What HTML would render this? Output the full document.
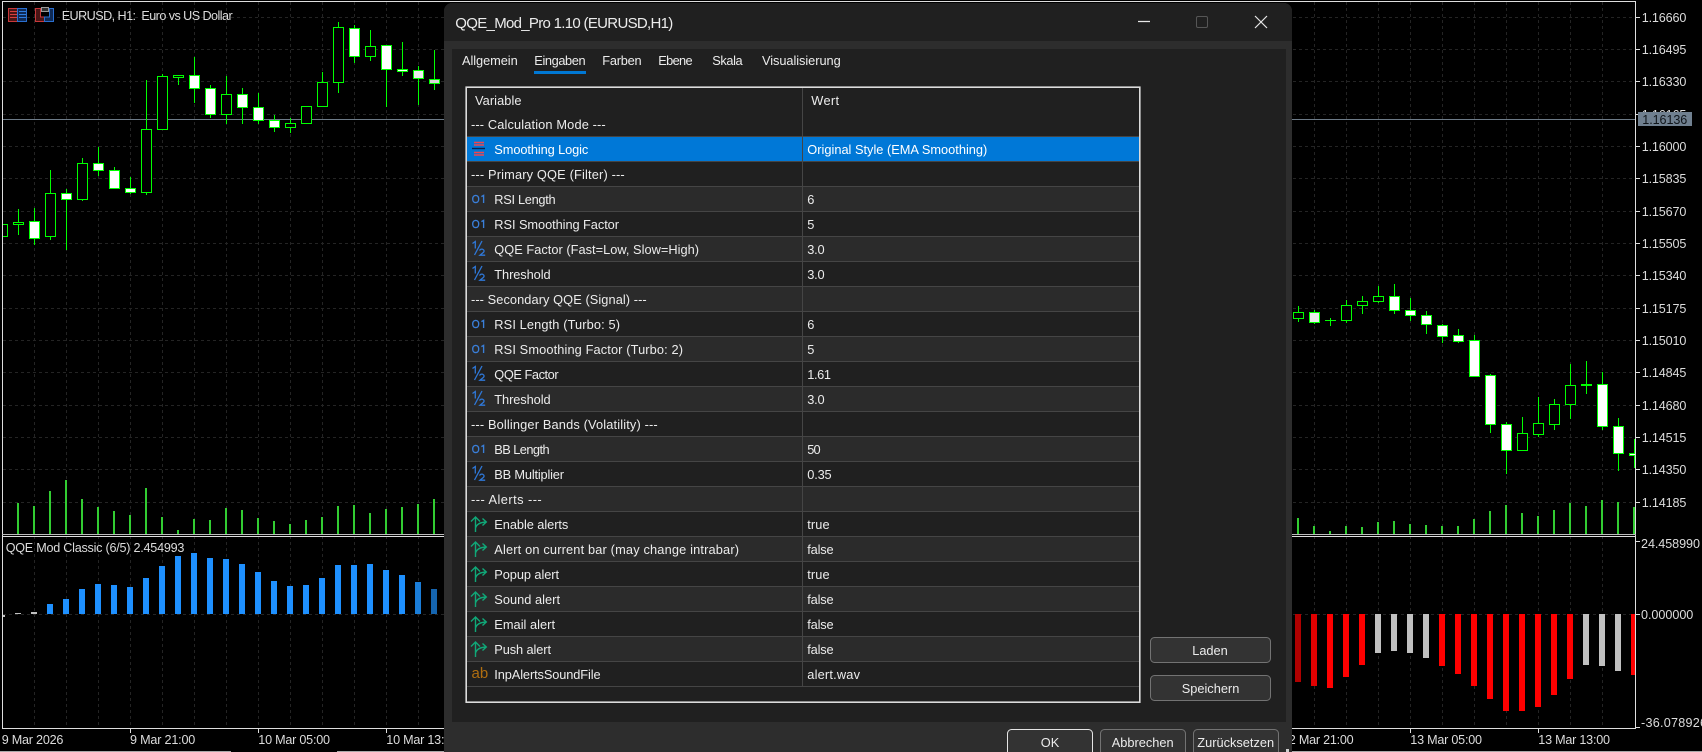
<!DOCTYPE html>
<html><head><meta charset="utf-8"><title>QQE_Mod_Pro 1.10 (EURUSD,H1)</title>
<style>
html,body{margin:0;padding:0;background:#000;width:1702px;height:752px;overflow:hidden}
svg{display:block}
text{font-family:"Liberation Sans",sans-serif;font-size:13px;white-space:pre}
.c text{fill:#dcdcdc;font-size:12.6px}
.d text{fill:#ececec;font-size:12.8px}
.m{text-anchor:middle}
</style></head><body>
<svg width="1702" height="752" viewBox="0 0 1702 752" xmlns="http://www.w3.org/2000/svg">
<defs><clipPath id="pl"><rect x="3" y="2" width="1632" height="726"/></clipPath></defs>
<rect width="1702" height="752" fill="#000"/>
<g shape-rendering="crispEdges" clip-path="url(#pl)">
<path fill="none" stroke="#242424" stroke-dasharray="3 3" d="M3 17.5H1635M3 49.5H1635M3 81.5H1635M3 114.5H1635M3 146.5H1635M3 178.5H1635M3 211.5H1635M3 243.5H1635M3 275.5H1635M3 308.5H1635M3 340.5H1635M3 372.5H1635M3 405.5H1635M3 437.5H1635M3 469.5H1635M3 502.5H1635M3 614.5H1635"/>
<path fill="none" stroke="#242424" stroke-dasharray="3 3" d="M34.5 2V728M66.5 2V728M98.5 2V728M130.5 2V728M162.5 2V728M194.5 2V728M226.5 2V728M258.5 2V728M290.5 2V728M322.5 2V728M354.5 2V728M386.5 2V728M418.5 2V728M1314.5 2V728M1346.5 2V728M1378.5 2V728M1410.5 2V728M1442.5 2V728M1474.5 2V728M1506.5 2V728M1538.5 2V728M1570.5 2V728M1602.5 2V728"/>
<rect x="3" y="119" width="1632" height="1" fill="#6d7b88"/>
<!-- wicks -->
<path fill="none" stroke="#00ff00" d="M18.5 209V235M34.5 208V245M50.5 170V240M66.5 189V250M82.5 158V201M98.5 147V176M114.5 167V189M130.5 177V194M146.5 80V195M162.5 74V130M178.5 75V85M194.5 57V103M210.5 85V118M226.5 76V124M242.5 88V124M258.5 93V124M274.5 115V132M290.5 118V133M322.5 72V107M338.5 22V93M354.5 25V63M370.5 30V61M386.5 45V107M402.5 42V76M418.5 66V105M434.5 50V90M1298.5 306V322M1314.5 310V324M1330.5 318V326M1346.5 300V323M1362.5 296V314M1378.5 286V303M1394.5 284V314M1410.5 298V321M1426.5 311V334M1442.5 324V343M1458.5 329V343M1474.5 335V377M1490.5 374V433M1506.5 422V474M1522.5 417V451M1538.5 397V437M1554.5 399V430M1570.5 364V419M1586.5 361V394M1602.5 372V430M1618.5 418V471M1634.5 439V468M1325 320.5H1336"/>
<!-- hollow bodies -->
<path fill="#000" stroke="#00ff00" d="M-2.5 224.5h10V236.5h-10zM13.5 222.5h10V224.5h-10zM45.5 193.5h10V236.5h-10zM77.5 163.5h10V199.5h-10zM141.5 129.5h10V192.5h-10zM157.5 76.5h10V129.5h-10zM173.5 75.5h10V77.5h-10zM221.5 94.5h10V114.5h-10zM285.5 123.5h10V127.5h-10zM301.5 106.5h10V123.5h-10zM317.5 82.5h10V106.5h-10zM333.5 27.5h10V82.5h-10zM365.5 46.5h10V56.5h-10zM1293.5 312.5h10V318.5h-10zM1341.5 305.5h10V320.5h-10zM1357.5 301.5h10V305.5h-10zM1373.5 296.5h10V301.5h-10zM1517.5 433.5h10V450.5h-10zM1533.5 423.5h10V434.5h-10zM1549.5 404.5h10V424.5h-10zM1565.5 385.5h10V404.5h-10z"/>
<!-- white bodies -->
<path fill="#fff" stroke="#00ff00" d="M29.5 221.5h10V238.5h-10zM61.5 193.5h10V199.5h-10zM93.5 163.5h10V170.5h-10zM109.5 170.5h10V188.5h-10zM125.5 188.5h10V192.5h-10zM189.5 75.5h10V88.5h-10zM205.5 88.5h10V114.5h-10zM237.5 94.5h10V107.5h-10zM253.5 107.5h10V120.5h-10zM269.5 120.5h10V127.5h-10zM349.5 28.5h10V56.5h-10zM381.5 45.5h10V69.5h-10zM397.5 69.5h10V71.5h-10zM1389.5 296.5h10V310.5h-10zM1405.5 310.5h10V315.5h-10zM1421.5 315.5h10V324.5h-10zM1437.5 325.5h10V336.5h-10zM1453.5 335.5h10V341.5h-10zM1469.5 340.5h10V376.5h-10zM1485.5 375.5h10V424.5h-10zM1501.5 424.5h10V450.5h-10zM1597.5 384.5h10V426.5h-10zM1613.5 426.5h10V453.5h-10zM1629.5 453.5h10V455.5h-10z"/>
<path fill="#ececec" stroke="#00ff00" d="M413.5 70.5h10V78.5h-10zM1309.5 312.5h10V322.5h-10z"/>
<path fill="#d8d8d8" stroke="#00ff00" d="M429.5 79.5h10V83.5h-10z"/>
<rect x="1581" y="384" width="11" height="2" fill="#00ff00"/>
<!-- volumes -->
<path fill="none" stroke="#32cd32" stroke-width="2" d="M18 503V534M34 506V534M50 491V534M66 480V534M82 499V534M98 507V534M114 511V534M130 515V534M146 488V534M162 517V534M178 530V534M194 519V534M210 520V534M226 508V534M242 510V534M258 518V534M274 521V534M290 524V534M306 520V534M322 517V534M338 506V534M354 505V534M370 513V534M386 509V534M402 507V534M418 504V534M434 499V534M1298 518V534M1314 526V534M1330 531V534M1346 526V534M1362 527V534M1378 522V534M1394 521V534M1410 524V534M1426 525V534M1442 526V534M1458 526V534M1474 519V534M1490 511V534M1506 505V534M1522 513V534M1538 516V534M1554 510V534M1570 503V534M1586 506V534M1602 500V534M1618 502V534M1634 507V534"/>
<!-- indicator -->
<path fill="#1e90ff" d="M47 604h6V614h-6zM63 599h6V614h-6zM79 589h6V614h-6zM95 584h6V614h-6zM111 585h6V614h-6zM127 587h6V614h-6zM143 578h6V614h-6zM159 566h6V614h-6zM175 556h6V614h-6zM191 553h6V614h-6zM207 558h6V614h-6zM223 559h6V614h-6zM239 564h6V614h-6zM255 572h6V614h-6zM271 581h6V614h-6zM287 586h6V614h-6zM303 585h6V614h-6zM319 578h6V614h-6zM335 565h6V614h-6zM351 565h6V614h-6zM367 564h6V614h-6zM383 570h6V614h-6zM399 575h6V614h-6z"/>
<path fill="#1a7dd8" d="M415 582h6V614h-6z"/>
<path fill="#1565b0" d="M431 589h6V614h-6z"/>
<path fill="#c0c0c0" d="M15 613h6v1h-6zM31 612h6v2h-6zM3 615h2v2h-2z"/>
<path fill="#b00000" d="M1295 614h6V682h-6z"/>
<path fill="#e00000" d="M1311 614h6V686h-6z"/>
<path fill="#ff0000" d="M1327 614h6V688h-6zM1343 614h6V677h-6zM1359 614h6V665h-6zM1439 614h6V666h-6zM1455 614h6V674h-6zM1471 614h6V686h-6zM1487 614h6V699h-6zM1503 614h6V711h-6zM1519 614h6V711h-6zM1535 614h6V707h-6zM1551 614h6V695h-6zM1567 614h6V679h-6zM1631 614h6V675h-6z"/>
<path fill="#c0c0c0" d="M1375 614h6V653h-6zM1391 614h6V651h-6zM1407 614h6V653h-6zM1423 614h6V658h-6zM1583 614h6V665h-6zM1599 614h6V666h-6zM1615 614h6V671h-6z"/>
</g>
<!-- frame lines -->
<g shape-rendering="crispEdges" fill="#dedede">
<rect x="2" y="1" width="1634" height="1"/>
<rect x="2" y="1" width="1" height="728"/>
<rect x="1635" y="1" width="1" height="728"/>
<rect x="2" y="534" width="1634" height="1" fill="#bdbdbd"/>
<rect x="2" y="536" width="1634" height="1"/>
<rect x="2" y="728" width="1634" height="1"/>
<rect x="130" y="728" width="1" height="5"/><rect x="258" y="728" width="1" height="5"/><rect x="386" y="728" width="1" height="5"/><rect x="1410" y="728" width="1" height="5"/><rect x="1538" y="728" width="1" height="5"/>
<path stroke="#dedede" fill="none" d="M1635 17.5h5M1635 49.5h5M1635 81.5h5M1635 114.5h5M1635 146.5h5M1635 178.5h5M1635 211.5h5M1635 243.5h5M1635 275.5h5M1635 308.5h5M1635 340.5h5M1635 372.5h5M1635 405.5h5M1635 437.5h5M1635 469.5h5M1635 502.5h5M1635 541.5h5M1635 614.5h5M1635 727.5h5"/>
<rect x="0" y="751" width="231" height="1" fill="#a8a8a8"/>
<rect x="337" y="751" width="1365" height="1" fill="#a8a8a8"/>
</g>
<!-- toolbar icons -->
<g fill="none" stroke-width="1" shape-rendering="crispEdges">
<rect x="8.5" y="8.5" width="9" height="13" fill="#4a1515" stroke="#c8383a"/>
<path stroke="#d84040" d="M10 11.5h7M10 14.5h7M10 17.5h7"/>
<rect x="17.5" y="8.5" width="9" height="13" fill="#0f2a55" stroke="#2a6fd0"/>
<path stroke="#2f7fe0" d="M19 11.5h7M19 14.5h7M19 17.5h7"/>
<path d="M35.5 8.5h5V17h4v4.5h-9z" fill="#4a1515" stroke="#c8383a"/>
<path d="M53.5 8.5h-4V17h-5v4.5h9z" fill="#0f2a55" stroke="#2a6fd0"/>
<rect x="41.5" y="7.5" width="7" height="4" fill="#333" stroke="#9a9a9a"/>
</g>
<!-- chart text -->
<g class="c">
<text x="61.7" y="20" textLength="171">EURUSD, H1:  Euro vs US Dollar</text>
<text x="5.7" y="552" textLength="178.7">QQE Mod Classic (6/5) 2.454993</text>
<text x="1.7" y="744" textLength="61.7">9 Mar 2026</text>
<text x="130" y="744" textLength="65.3">9 Mar 21:00</text>
<text x="258.3" y="744" textLength="71.7">10 Mar 05:00</text>
<text x="386.3" y="744" textLength="71.7">10 Mar 13:00</text>
<text x="1282" y="744" textLength="71.7">12 Mar 21:00</text>
<text x="1410.3" y="744" textLength="71.7">13 Mar 05:00</text>
<text x="1538.3" y="744" textLength="71.7">13 Mar 13:00</text>
<text x="1641.7" y="22" textLength="44.7">1.16660</text>
<text x="1641.7" y="54" textLength="44.7">1.16495</text>
<text x="1641.7" y="86" textLength="44.7">1.16330</text>
<text x="1641.7" y="119" textLength="44.7">1.16165</text>
<text x="1641.7" y="151" textLength="44.7">1.16000</text>
<text x="1641.7" y="183" textLength="44.7">1.15835</text>
<text x="1641.7" y="216" textLength="44.7">1.15670</text>
<text x="1641.7" y="248" textLength="44.7">1.15505</text>
<text x="1641.7" y="280" textLength="44.7">1.15340</text>
<text x="1641.7" y="313" textLength="44.7">1.15175</text>
<text x="1641.7" y="345" textLength="44.7">1.15010</text>
<text x="1641.7" y="377" textLength="44.7">1.14845</text>
<text x="1641.7" y="410" textLength="44.7">1.14680</text>
<text x="1641.7" y="442" textLength="44.7">1.14515</text>
<text x="1641.7" y="474" textLength="44.7">1.14350</text>
<text x="1641.7" y="507" textLength="44.7">1.14185</text>
<text x="1641" y="548" textLength="59">24.458990</text>
<text x="1641" y="619" textLength="52.3">0.000000</text>
<text x="1641" y="727" textLength="66">-36.078926</text>
</g>
<rect x="1638" y="112" width="54" height="14" fill="#708090"/>
<text x="1642.3" y="124" textLength="45" style="font-size:12.6px" fill="#10151a">1.16136</text>

<!-- dialog -->
<rect x="444" y="3" width="848" height="770" rx="8" fill="#2d2d2d"/>
<path d="M444 41V11a8 8 0 0 1 8-8H1284a8 8 0 0 1 8 8V41z" fill="#202020"/>
<rect x="452" y="49" width="834" height="673" fill="#202020"/>
<g class="d">
<text x="455.3" y="28" style="font-size:15px" textLength="218">QQE_Mod_Pro 1.10 (EURUSD,H1)</text>
<text x="462" y="65" textLength="55.7">Allgemein</text>
<text x="534.3" y="65" textLength="51.3">Eingaben</text>
<text x="602.3" y="65" textLength="39.3">Farben</text>
<text x="658.3" y="65" textLength="34.3">Ebene</text>
<text x="712.3" y="65" textLength="30.3">Skala</text>
<text x="762" y="65" textLength="78.7">Visualisierung</text>
</g>
<rect x="534" y="71" width="52" height="3" fill="#0078d4"/>
<path d="M1138 21.5h12M1255 16l12 12M1267 16l-12 12" stroke="#e8e8e8" stroke-width="1.2" fill="none"/>
<rect x="1196.5" y="16.5" width="11" height="11" rx="1.5" fill="none" stroke="#565656"/>

<!-- table -->
<g shape-rendering="crispEdges">
<rect x="467" y="88" width="672" height="614" fill="#202020"/>
<g fill="#2b2b2b">
<rect x="467" y="186" width="672" height="25"/><rect x="467" y="236" width="672" height="25"/><rect x="467" y="286" width="672" height="25"/><rect x="467" y="336" width="672" height="25"/><rect x="467" y="386" width="672" height="25"/><rect x="467" y="436" width="672" height="25"/><rect x="467" y="486" width="672" height="25"/><rect x="467" y="536" width="672" height="25"/><rect x="467" y="586" width="672" height="25"/><rect x="467" y="636" width="672" height="25"/>
</g>
<rect x="467" y="136" width="672" height="25" fill="#0078d7"/>
<path stroke="#454545" fill="none" d="M467 136.5H1139M467 161.5H1139M467 186.5H1139M467 211.5H1139M467 236.5H1139M467 261.5H1139M467 286.5H1139M467 311.5H1139M467 336.5H1139M467 361.5H1139M467 386.5H1139M467 411.5H1139M467 436.5H1139M467 461.5H1139M467 486.5H1139M467 511.5H1139M467 536.5H1139M467 561.5H1139M467 586.5H1139M467 611.5H1139M467 636.5H1139M467 661.5H1139M467 686.5H1139M802.5 88V687"/>
</g>
<rect x="466.2" y="87.2" width="673.6" height="615" fill="none" stroke="#dcdcdc" stroke-width="1.6"/>

<g class="d">
<text x="475" y="105" textLength="46.5">Variable</text>
<text x="811.3" y="105" textLength="27.7">Wert</text>
<text x="471" y="129" textLength="134.7">--- Calculation Mode ---</text>
<text x="494.3" y="154" textLength="94" style="fill:#fff">Smoothing Logic</text>
<text x="807.3" y="154" textLength="180" style="fill:#fff">Original Style (EMA Smoothing)</text>
<text x="471" y="179" textLength="153.7">--- Primary QQE (Filter) ---</text>
<text x="494.3" y="204" textLength="61.3">RSI Length</text><text x="807.3" y="204">6</text>
<text x="494.3" y="229" textLength="124.7">RSI Smoothing Factor</text><text x="807.3" y="229">5</text>
<text x="494.3" y="254" textLength="204.7">QQE Factor (Fast=Low, Slow=High)</text><text x="807.3" y="254" textLength="17.3">3.0</text>
<text x="494.3" y="279" textLength="56.3">Threshold</text><text x="807.3" y="279" textLength="17.3">3.0</text>
<text x="471" y="304" textLength="175.7">--- Secondary QQE (Signal) ---</text>
<text x="494.3" y="329" textLength="125.7">RSI Length (Turbo: 5)</text><text x="807.3" y="329">6</text>
<text x="494.3" y="354" textLength="188.7">RSI Smoothing Factor (Turbo: 2)</text><text x="807.3" y="354">5</text>
<text x="494.3" y="379" textLength="64.3">QQE Factor</text><text x="807.3" y="379" textLength="23.7">1.61</text>
<text x="494.3" y="404" textLength="56.3">Threshold</text><text x="807.3" y="404" textLength="17.3">3.0</text>
<text x="471" y="429" textLength="186.7">--- Bollinger Bands (Volatility) ---</text>
<text x="494.3" y="454" textLength="55.3">BB Length</text><text x="807.3" y="454" textLength="13.3">50</text>
<text x="494.3" y="479" textLength="69.7">BB Multiplier</text><text x="807.3" y="479" textLength="24.3">0.35</text>
<text x="471" y="504" textLength="70.7">--- Alerts ---</text>
<text x="494.3" y="529" textLength="74">Enable alerts</text><text x="807.3" y="529" textLength="22.3">true</text>
<text x="494.3" y="554" textLength="244.7">Alert on current bar (may change intrabar)</text><text x="807.3" y="554" textLength="26.3">false</text>
<text x="494.3" y="579" textLength="64.7">Popup alert</text><text x="807.3" y="579" textLength="22.3">true</text>
<text x="494.3" y="604" textLength="65.7">Sound alert</text><text x="807.3" y="604" textLength="26.3">false</text>
<text x="494.3" y="629" textLength="60.7">Email alert</text><text x="807.3" y="629" textLength="26.3">false</text>
<text x="494.3" y="654" textLength="56.7">Push alert</text><text x="807.3" y="654" textLength="26.3">false</text>
<text x="494.3" y="679" textLength="106.3">InpAlertsSoundFile</text><text x="807.3" y="679" textLength="52.7">alert.wav</text>
</g>

<!-- enum icon -->
<path fill="none" d="M474 142.5h10M474 145h10M474 152.5h10M474 155h10" stroke="#f04650" stroke-width="1.4"/>
<path fill="none" d="M472 148.5h13" stroke="#0b2350" stroke-width="1.4"/>

<!-- int icons -->
<g fill="none" stroke="#3a7fd9" stroke-width="1.35">
<path transform="translate(0,186)" d="M475.7 9.4c2 0 3 1.6 3 3.6s-1 3.6-3 3.6-3-1.6-3-3.6 1-3.6 3-3.6zM481.4 10.6l2.2-1.2V17"/>
<path transform="translate(0,211)" d="M475.7 9.4c2 0 3 1.6 3 3.6s-1 3.6-3 3.6-3-1.6-3-3.6 1-3.6 3-3.6zM481.4 10.6l2.2-1.2V17"/>
<path transform="translate(0,311)" d="M475.7 9.4c2 0 3 1.6 3 3.6s-1 3.6-3 3.6-3-1.6-3-3.6 1-3.6 3-3.6zM481.4 10.6l2.2-1.2V17"/>
<path transform="translate(0,336)" d="M475.7 9.4c2 0 3 1.6 3 3.6s-1 3.6-3 3.6-3-1.6-3-3.6 1-3.6 3-3.6zM481.4 10.6l2.2-1.2V17"/>
<path transform="translate(0,436)" d="M475.7 9.4c2 0 3 1.6 3 3.6s-1 3.6-3 3.6-3-1.6-3-3.6 1-3.6 3-3.6zM481.4 10.6l2.2-1.2V17"/>
</g>
<!-- double icons -->
<g fill="none" stroke="#2f78d8" stroke-width="1.3">
<path transform="translate(0,236)" d="M472.5 7.5l2.8-2V12.5M482 5L474.5 19M479.5 14.5c.8-1.2 2-1.6 3.2-1.2 1.8.7 1.6 2.2.7 3.1l-3.4 2.8h5.2"/>
<path transform="translate(0,261)" d="M472.5 7.5l2.8-2V12.5M482 5L474.5 19M479.5 14.5c.8-1.2 2-1.6 3.2-1.2 1.8.7 1.6 2.2.7 3.1l-3.4 2.8h5.2"/>
<path transform="translate(0,361)" d="M472.5 7.5l2.8-2V12.5M482 5L474.5 19M479.5 14.5c.8-1.2 2-1.6 3.2-1.2 1.8.7 1.6 2.2.7 3.1l-3.4 2.8h5.2"/>
<path transform="translate(0,386)" d="M472.5 7.5l2.8-2V12.5M482 5L474.5 19M479.5 14.5c.8-1.2 2-1.6 3.2-1.2 1.8.7 1.6 2.2.7 3.1l-3.4 2.8h5.2"/>
<path transform="translate(0,461)" d="M472.5 7.5l2.8-2V12.5M482 5L474.5 19M479.5 14.5c.8-1.2 2-1.6 3.2-1.2 1.8.7 1.6 2.2.7 3.1l-3.4 2.8h5.2"/>
</g>
<!-- bool icons -->
<g fill="none" stroke="#10a878" stroke-width="1.4">
<path transform="translate(0,511)" d="M475.5 21V6M471 10.5l4.5-4.5 4.5 4.5M475.5 17c1-3.5 4-5.6 10.5-6M482.5 7.5l3.8 3.5-3.8 3.5"/>
<path transform="translate(0,536)" d="M475.5 21V6M471 10.5l4.5-4.5 4.5 4.5M475.5 17c1-3.5 4-5.6 10.5-6M482.5 7.5l3.8 3.5-3.8 3.5"/>
<path transform="translate(0,561)" d="M475.5 21V6M471 10.5l4.5-4.5 4.5 4.5M475.5 17c1-3.5 4-5.6 10.5-6M482.5 7.5l3.8 3.5-3.8 3.5"/>
<path transform="translate(0,586)" d="M475.5 21V6M471 10.5l4.5-4.5 4.5 4.5M475.5 17c1-3.5 4-5.6 10.5-6M482.5 7.5l3.8 3.5-3.8 3.5"/>
<path transform="translate(0,611)" d="M475.5 21V6M471 10.5l4.5-4.5 4.5 4.5M475.5 17c1-3.5 4-5.6 10.5-6M482.5 7.5l3.8 3.5-3.8 3.5"/>
<path transform="translate(0,636)" d="M475.5 21V6M471 10.5l4.5-4.5 4.5 4.5M475.5 17c1-3.5 4-5.6 10.5-6M482.5 7.5l3.8 3.5-3.8 3.5"/>
</g>
<text x="471.5" y="678" style="font-size:15px" fill="#b06e10">ab</text>

<!-- buttons -->
<g fill="#333333" stroke="#737373">
<rect x="1150.5" y="637.5" width="120" height="25" rx="4"/>
<rect x="1150.5" y="675.5" width="120" height="25" rx="4"/>
<rect x="1007.5" y="729.5" width="85" height="40" rx="4" stroke="#e4e4e4"/>
<rect x="1100.5" y="729.5" width="85" height="40" rx="4"/>
<rect x="1193.5" y="729.5" width="85" height="40" rx="4"/>
</g>
<g class="d">
<text class="m" x="1210" y="655">Laden</text>
<text class="m" x="1210.5" y="693">Speichern</text>
<text class="m" x="1050" y="747">OK</text>
<text class="m" x="1142.7" y="747">Abbrechen</text>
<text class="m" x="1235.7" y="747">Zurücksetzen</text>
</g>
<rect x="1286" y="749" width="3" height="3" fill="#cfcfcf"/>
</svg>
</body></html>
